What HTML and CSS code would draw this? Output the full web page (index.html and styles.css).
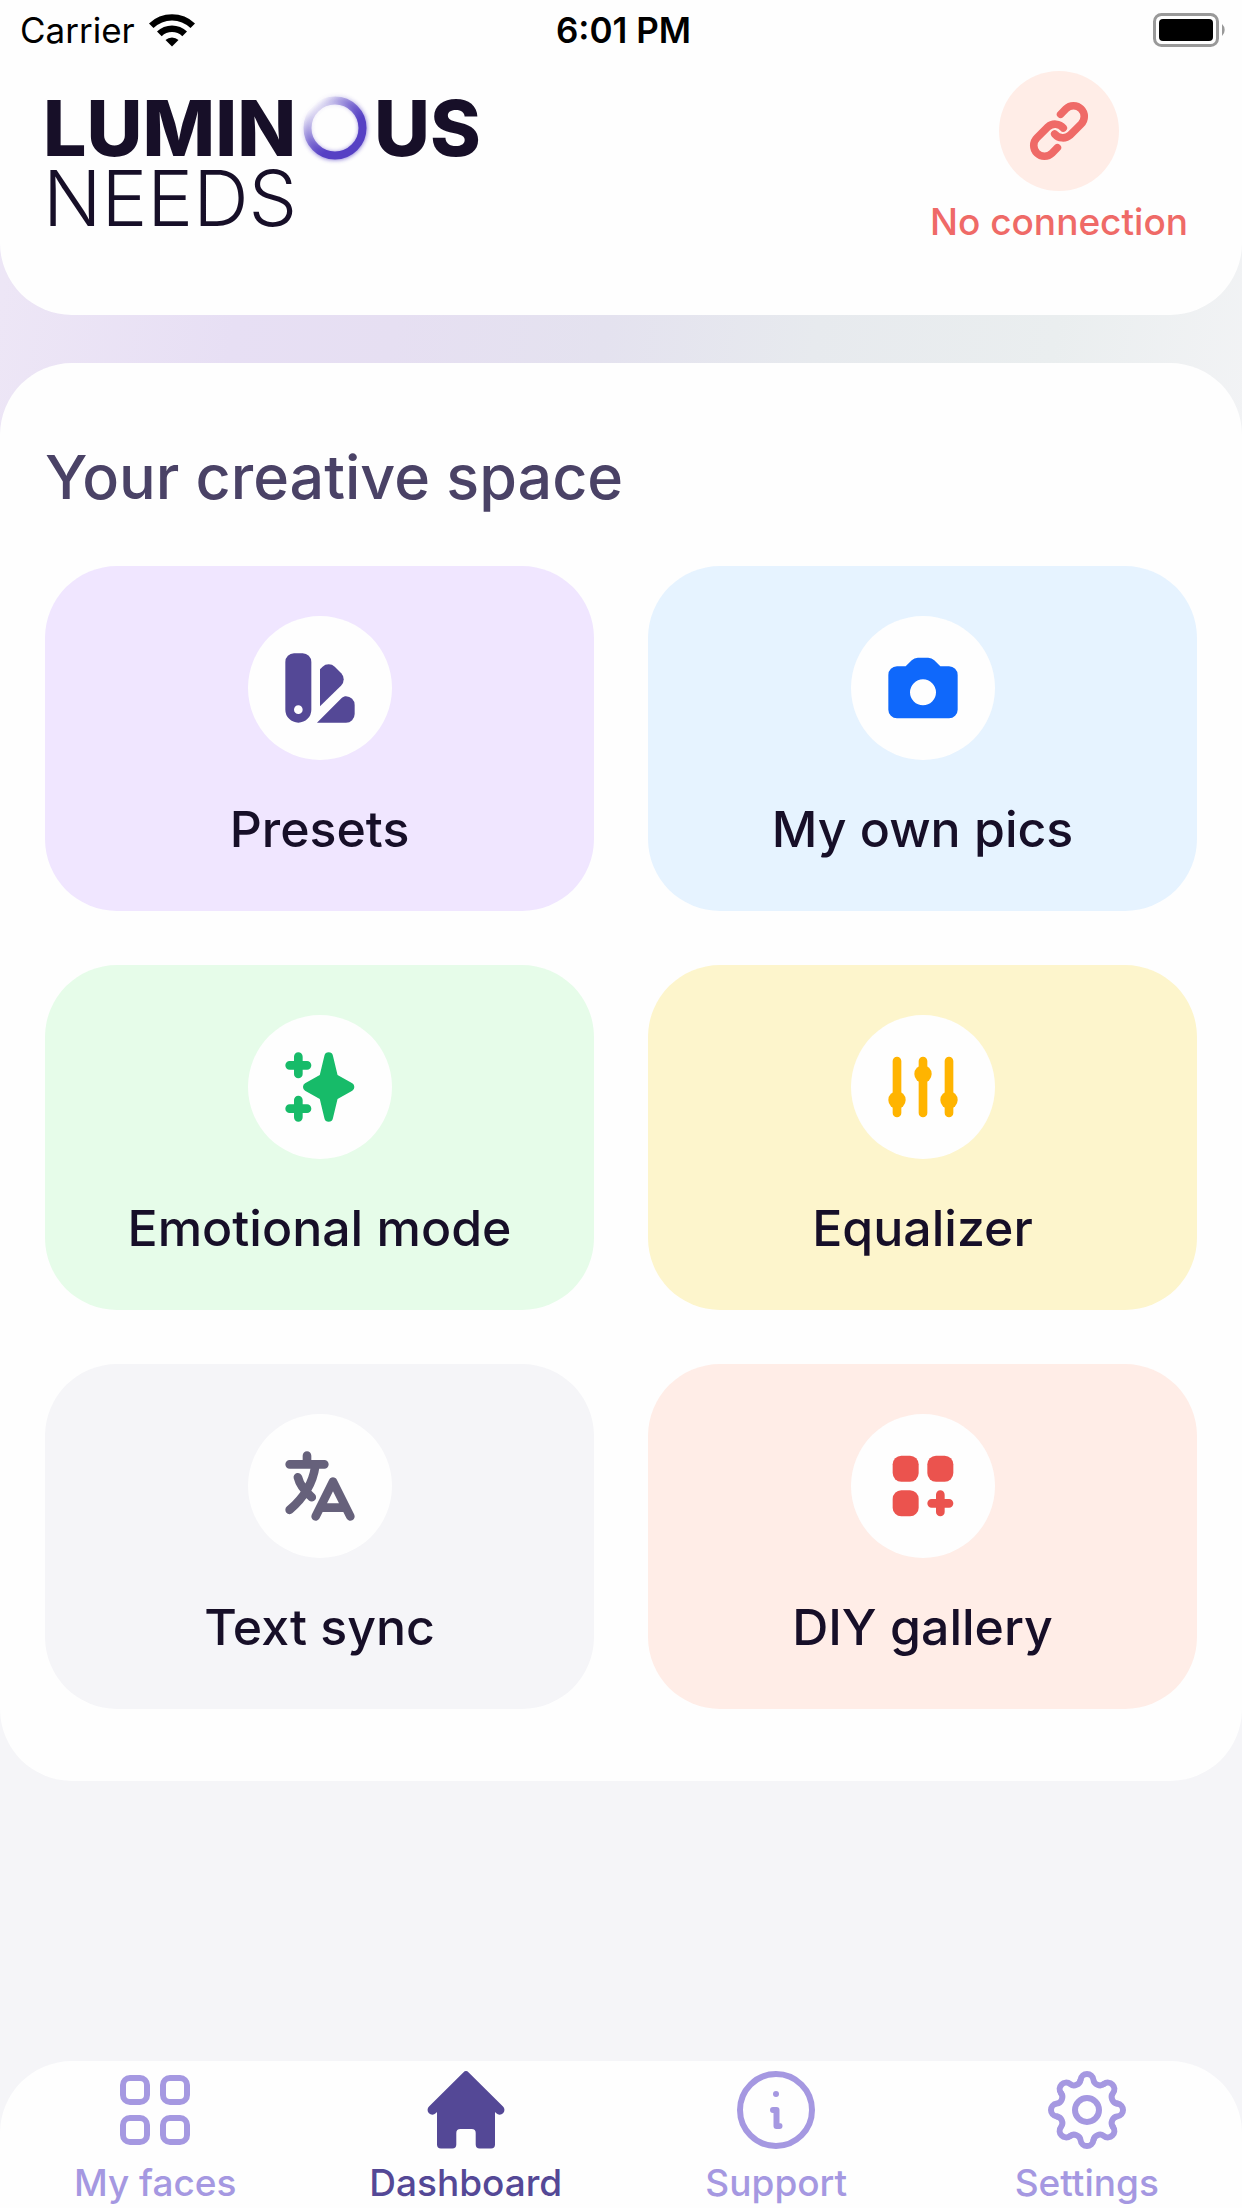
FILE: index.html
```html
<!DOCTYPE html>
<html lang="en">
<head>
  <meta charset="UTF-8" />
  <meta name="viewport" content="width=device-width, initial-scale=1.0">
  <title>Luminous Needs</title>
  <link rel="stylesheet" href="styles.css">
</head>
<body>

<header class="header">
  <div class="status-bar">
    <div class="carrier">
      <span>Carrier</span>
      <svg class="wifi" viewBox="0 0 46 34" aria-hidden="true">
        <path d="M0 10.500a33 33 0 0 1 46 0l-4.500 4.500a26.500 26.500 0 0 0-37 0z"/>
        <path d="M8 18.500a21.500 21.500 0 0 1 30 0l-4.700 4.700a14.800 14.800 0 0 0-20.600 0z"/>
        <path d="M16.500 27a9.500 9.500 0 0 1 13 0L23 33.500z"/>
      </svg>
    </div>
    <span class="time">6:01 PM</span>
    <svg class="battery" viewBox="0 0 74 34" aria-hidden="true">
      <rect x="1.500" y="1.500" width="63" height="31" rx="7" fill="none" stroke="#999" stroke-width="3"/>
      <rect x="6" y="6" width="54" height="22" rx="4"/>
      <path d="M69 11a8 8 0 0 1 0 12z" fill="#999"/>
    </svg>
  </div>

  <div class="brand-row">
    <div class="logo">
      <div class="logo-top">
        <span>LUMIN</span>
        <svg class="logo-ring" viewBox="0 0 76 76" role="img" aria-label="O">
          <defs>
            <linearGradient id="ring" x1="0.1" y1="0.1" x2="0.8" y2="0.85">
              <stop offset="0" stop-color="#5640c4" stop-opacity="0"/>
              <stop offset="0.75" stop-color="#5640c4"/>
            </linearGradient>
            <filter id="glow" x="-20%" y="-20%" width="140%" height="140%">
              <feGaussianBlur stdDeviation="2"/>
            </filter>
          </defs>
          <circle cx="38" cy="38" r="28" fill="none" stroke="url(#ring)" stroke-width="8" filter="url(#glow)" opacity="0.7"/>
          <circle cx="38" cy="38" r="27.500" fill="none" stroke="url(#ring)" stroke-width="8"/>
        </svg>
        <span>US</span>
      </div>
      <div class="logo-bottom">NEEDS</div>
    </div>

    <button class="connection" type="button">
      <span class="connection-icon">
        <svg viewBox="0 0 60 60" aria-hidden="true">
          <path d="M31.600 13.300L36.900 7.900A10.700 10.700 0 0 1 52.100 23.100L41 34.200A10.700 10.700 0 0 1 25.700 33"/>
          <path d="M28.400 46.700L23.100 52.100A10.700 10.700 0 0 1 7.900 36.900L19 25.800A10.700 10.700 0 0 1 34.300 27"/>
        </svg>
      </span>
      <span>No connection</span>
    </button>
  </div>
</header>

<main class="panel">
  <h1 class="title">Your creative space</h1>

  <div class="grid">
    <button class="card presets" type="button">
      <span class="card-icon">
        <svg viewBox="0 0 24 24" aria-hidden="true">
          <path fill-rule="evenodd" d="M6 4h2a2 2 0 0 1 2 2v11a3 3 0 0 1-6 0V6a2 2 0 0 1 2-2zM7 16a1 1 0 1 0 0 2a1 1 0 0 0 0-2z"/>
          <path d="M12 7.700l.6-.6a2 2 0 0 1 2.800 0l1.500 1.500a2 2 0 0 1 0 2.800L12 16.200z"/>
          <path d="M11.300 20L17 14.300c.3-.3.7-.4 1-.4a2 2 0 0 1 2 2V18a2 2 0 0 1-2 2z"/>
        </svg>
      </span>
      <span class="card-label">Presets</span>
    </button>

    <button class="card pics" type="button">
      <span class="card-icon">
        <svg viewBox="0 0 24 24" aria-hidden="true">
          <path fill-rule="evenodd" d="M6 7h2l1.400-1.400A2 2 0 0 1 10.800 5h2.400a2 2 0 0 1 1.400.6L16 7h2a2 2 0 0 1 2 2v8a2 2 0 0 1-2 2H6a2 2 0 0 1-2-2V9a2 2 0 0 1 2-2zM12 10a3 3 0 1 0 0 6a3 3 0 0 0 0-6z"/>
        </svg>
      </span>
      <span class="card-label">My own pics</span>
    </button>

    <button class="card emotional" type="button">
      <span class="card-icon">
        <svg viewBox="0 0 24 24" aria-hidden="true">
          <path class="line" d="M5 7h4M7 5v4M5 17h4M7 15v4"/>
          <path d="M13.030 4.750a1 1 0 0 1 1.940 0L16.050 9.250l3.400 1.900a1 1 0 0 1 0 1.700L16.050 14.750l-1.080 4.500a1 1 0 0 1-1.940 0L11.950 14.750l-3.400-1.900a1 1 0 0 1 0-1.700L11.950 9.250z"/>
        </svg>
      </span>
      <span class="card-label">Emotional mode</span>
    </button>

    <button class="card equalizer" type="button">
      <span class="card-icon">
        <svg viewBox="0 0 24 24" aria-hidden="true">
          <path class="line" d="M6 6v12M12 6v12M18 6v12"/>
          <circle cx="6" cy="15" r="2"/>
          <circle cx="12" cy="9" r="2"/>
          <circle cx="18" cy="15" r="2"/>
        </svg>
      </span>
      <span class="card-label">Equalizer</span>
    </button>

    <button class="card sync" type="button">
      <span class="card-icon">
        <svg viewBox="0 0 24 24" aria-hidden="true">
          <path class="line" d="M9 5v2M5 7h8M10.900 7.500C10.400 11 8.500 14.500 5 17.500M6.900 10C7.300 11.700 8.600 13.300 10.100 14.600"/>
          <path class="line" d="M11 19l4-8l4 8M12.500 17h5"/>
        </svg>
      </span>
      <span class="card-label">Text sync</span>
    </button>

    <button class="card diy" type="button">
      <span class="card-icon">
        <svg viewBox="0 0 24 24" aria-hidden="true">
          <rect x="5" y="5" width="6" height="6" rx="2"/>
          <rect x="13" y="5" width="6" height="6" rx="2"/>
          <rect x="5" y="13" width="6" height="6" rx="2"/>
          <path class="line" d="M14 16h4M16 14v4"/>
        </svg>
      </span>
      <span class="card-label">DIY gallery</span>
    </button>
  </div>
</main>

<nav class="tabs">
  <a class="tab" href="#faces">
    <svg class="outline" viewBox="0 0 80 80" aria-hidden="true">
      <rect x="8" y="8" width="24" height="24" rx="7"/>
      <rect x="48" y="8" width="24" height="24" rx="7"/>
      <rect x="8" y="48" width="24" height="24" rx="7"/>
      <rect x="48" y="48" width="24" height="24" rx="7"/>
    </svg>
    <span>My faces</span>
  </a>
  <a class="tab active" href="#dashboard">
    <svg viewBox="0 0 80 80" aria-hidden="true">
      <path d="M37.300 2.400a3.800 3.800 0 0 1 5.400 0L77 36.500a4.700 4.700 0 0 1-6.700 6.800L69 42v32.500a4 4 0 0 1-4 4H53.700a4 4 0 0 1-4-4V63a4 4 0 0 0-4-4H34.300a4 4 0 0 0-4 4v11.500a4 4 0 0 1-4 4H15a4 4 0 0 1-4-4V42l-1.300 1.300A4.700 4.700 0 0 1 3 36.500z"/>
    </svg>
    <span>Dashboard</span>
  </a>
  <a class="tab" href="#support">
    <svg class="outline" viewBox="0 0 80 80" aria-hidden="true">
      <circle cx="40" cy="40" r="36"/>
      <path d="M37 40h3.500v16h3"/>
      <circle class="dot" cx="40" cy="24" r="3"/>
    </svg>
    <span>Support</span>
  </a>
  <a class="tab" href="#settings">
    <svg class="outline" viewBox="-40 -40 80 80" aria-hidden="true">
      <defs>
        <path id="tooth" d="M-6.500-30C-5.500-38 5.500-38 6.500-30C7.100-25.500 13-23.100 16.600-25.800"/>
      </defs>
      <use href="#tooth"/>
      <use href="#tooth" transform="rotate(45)"/>
      <use href="#tooth" transform="rotate(90)"/>
      <use href="#tooth" transform="rotate(135)"/>
      <use href="#tooth" transform="rotate(180)"/>
      <use href="#tooth" transform="rotate(225)"/>
      <use href="#tooth" transform="rotate(270)"/>
      <use href="#tooth" transform="rotate(315)"/>
      <circle cx="0" cy="0" r="12"/>
    </svg>
    <span>Settings</span>
  </a>
</nav>

</body>
</html>
```
FILE: styles.css
```css
* {
  box-sizing: border-box;
}

body {
  margin: 0;
  min-height: 100vh;
  display: flex;
  flex-direction: column;
  font-family: Inter, sans-serif;
  font-weight: 500;
  color: #170f28;
  background: #f5f5f8 linear-gradient(100deg, #ebe8f7 0%, #ede6f6 4%, #e7dff4 22%, #e6dff2 34%, #e4e2ef 50%, #e7eaee 66%, #eaeeef 84%, #f2f3f5 100%) no-repeat;
  background-size: 100% 480px;
}

button {
  border: 0;
  padding: 0;
  background: none;
  font: inherit;
  color: inherit;
  cursor: pointer;
}

svg {
  display: block;
  fill: currentColor;
}

.header {
  background: #fefefe;
  border-radius: 0 0 72px 72px;
  padding-bottom: 71px;
}

.status-bar {
  display: grid;
  grid-template-columns: 1fr auto 1fr;
  align-items: center;
  height: 60px;
  padding: 0 15px 0 20px;
  font-size: 35px;
  color: #000;
}

.carrier {
  display: flex;
  align-items: center;
  gap: 14px;
  font-weight: 400;
}

.wifi {
  width: 46px;
  height: 34px;
}

.time {
  font-weight: 600;
}

.battery {
  width: 74px;
  height: 34px;
  justify-self: end;
}

.brand-row {
  display: flex;
  justify-content: space-between;
  align-items: flex-start;
  padding: 11px 54px 0 43px;
}

.logo {
  padding-top: 22px;
  font-size: 77px;
  line-height: 70px;
}

.logo-top {
  display: flex;
  align-items: center;
  font-weight: 800;
}

.logo-ring {
  width: 76px;
  height: 76px;
  margin: -3px 1px;
}

.logo-bottom {
  font-weight: 300;
}

.connection {
  display: flex;
  flex-direction: column;
  align-items: center;
  gap: 8px;
  font-size: 37px;
  line-height: 45px;
  color: #ef6a67;
}

.connection-icon {
  display: flex;
  align-items: center;
  justify-content: center;
  width: 120px;
  height: 120px;
  border-radius: 50%;
  background: #ffede7;
}

.connection-icon svg {
  width: 60px;
  height: 60px;
  fill: none;
  stroke: currentColor;
  stroke-width: 7.6;
  stroke-linecap: round;
}

.panel {
  margin-top: 48px;
  padding: 72px 45px;
  border-radius: 72px;
  background: #fefefe;
}

.title {
  margin: 0 0 47px;
  font-size: 61px;
  line-height: 84px;
  font-weight: 500;
  color: #4a4266;
}

.grid {
  display: grid;
  grid-template-columns: 1fr 1fr;
  gap: 54px;
}

.card {
  display: flex;
  flex-direction: column;
  align-items: center;
  gap: 35px;
  padding: 50px 24px 48px;
  border-radius: 72px;
}

.card-icon {
  display: flex;
  align-items: center;
  justify-content: center;
  width: 144px;
  height: 144px;
  border-radius: 50%;
  background: #fefefe;
}

.card-icon svg {
  width: 104px;
  height: 104px;
}

.line {
  fill: none;
  stroke: currentColor;
  stroke-width: 2;
  stroke-linecap: round;
  stroke-linejoin: round;
}

.card-label {
  font-size: 50px;
  line-height: 68px;
  color: #170f28;
}

.presets {
  background: #f0e6ff;
  color: #544896;
}

.pics {
  background: #e6f3ff;
  color: #0f68fb;
}

.emotional {
  background: #e6fce9;
  color: #17bb69;
}

.equalizer {
  background: #fdf5cc;
  color: #ffb400;
}

.sync {
  background: #f5f5f8;
  color: #66617b;
}

.diy {
  background: #ffede7;
  color: #eb534e;
}

.tabs {
  display: grid;
  grid-template-columns: repeat(4, 1fr);
  margin-top: auto;
  padding: 9px 0 1px;
  border-radius: 72px 72px 0 0;
  background: #fefefe;
}

.tab {
  display: flex;
  flex-direction: column;
  align-items: center;
  gap: 8px;
  font-size: 37px;
  line-height: 49px;
  color: #a598e1;
  text-decoration: none;
}

.tab svg {
  width: 80px;
  height: 80px;
}

.tab.active {
  color: #544896;
}

.outline {
  fill: none;
  stroke: currentColor;
  stroke-width: 6;
  stroke-linecap: round;
  stroke-linejoin: round;
}

.dot {
  fill: currentColor;
  stroke: none;
}
```
